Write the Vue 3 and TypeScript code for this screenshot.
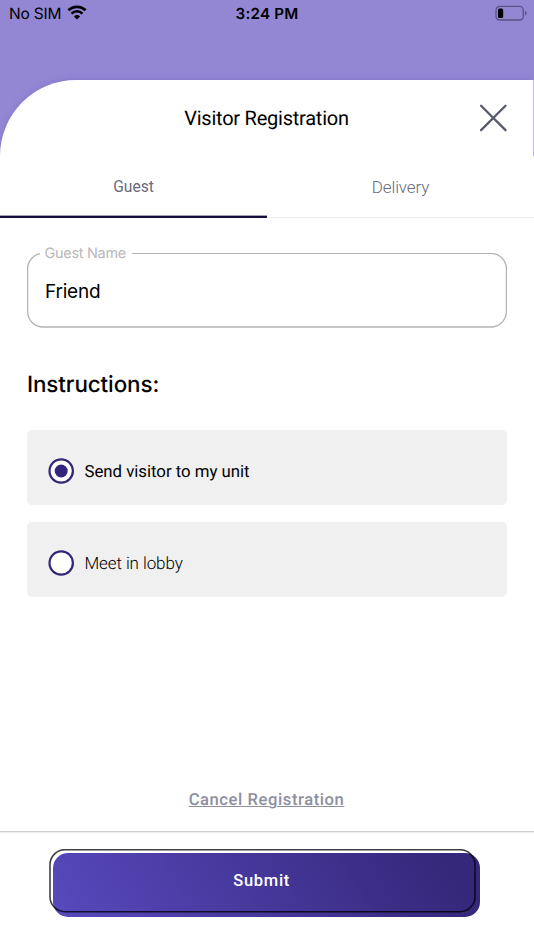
<script setup lang="ts">
import { ref } from 'vue'

type Tab = 'Guest' | 'Delivery'
const tabs: Tab[] = ['Guest', 'Delivery']
const activeTab = ref<Tab>('Guest')
const guestName = ref('Friend')
const options = ['Send visitor to my unit', 'Meet in lobby']
const selected = ref(options[0])
</script>

<template>
  <main class="screen">
    <div class="status">
      <div class="carrier">
        <span class="sim">No SIM</span>
        <svg class="wifi" width="20" height="15" viewBox="0 0 20 15">
          <path d="M1.4 5.3a12.3 12.3 0 0 1 17.2 0" fill="none" stroke="#000" stroke-width="2.7" />
          <path d="M4.5 8.6a7.9 7.9 0 0 1 11 0" fill="none" stroke="#000" stroke-width="2.5" />
          <path d="M10 14.5 6.9 11.4a4.5 4.5 0 0 1 6.2 0z" fill="#000" />
        </svg>
      </div>
      <span class="time">3:24 PM</span>
      <svg class="battery" width="32" height="16" viewBox="0 0 32 16">
        <rect x="1" y="1.4" width="27.3" height="13.6" rx="3.7" fill="none" stroke="#5b5383" stroke-width="1.3" />
        <rect x="3" y="3.6" width="5.2" height="9.3" rx="1.5" fill="#000" />
        <path d="M30 5.7q1.5.9 1.5 2.5T30 10.7z" fill="#5b5383" />
      </svg>
    </div>

    <div class="header-back">
      <header class="header">
        <h1 class="title">Visitor Registration</h1>
        <button class="close" aria-label="Close">
          <svg width="28" height="28" viewBox="0 0 28 28">
            <path d="M2.1 1.7 26.5 26.1M26.5 1.7 2.1 26.1" stroke="#585b6c" stroke-width="2.3" stroke-linecap="round" />
          </svg>
        </button>
      </header>
    </div>

    <nav class="tabs">
      <button
        v-for="tab in tabs"
        :key="tab"
        class="tab"
        :class="{ active: tab === activeTab }"
        @click="activeTab = tab"
      ><span>{{ tab }}</span></button>
    </nav>

    <section class="content">
      <label class="field">
        <svg class="field-frame" width="480" height="75" viewBox="0 0 480 75">
          <rect x="0.6" y="0.4" width="478.8" height="73.6" rx="15.5" fill="none" stroke="#b4b4b4" stroke-width="1.3" />
        </svg>
        <span class="field-label">Guest Name</span>
        <input v-model="guestName" class="field-input" type="text" />
      </label>
      <h2 class="heading">Instructions:</h2>
      <div class="options">
        <div
          v-for="option in options"
          :key="option"
          class="option"
          :class="{ selected: option === selected }"
          @click="selected = option"
        >
          <svg class="radio" width="26" height="26" viewBox="0 0 26 26">
            <circle cx="13.2" cy="13" r="11.7" fill="#fff" stroke="#32257b" stroke-width="2.2" />
            <circle v-if="option === selected" cx="13.2" cy="13" r="6.5" fill="#32257b" />
          </svg>
          <span class="option-text">{{ option }}</span>
        </div>
      </div>
      <a class="cancel">Cancel Registration</a>
    </section>

    <footer class="footer">
      <button class="submit">
        <span>Submit</span>
        <svg class="outline" width="428" height="65" viewBox="0 0 428 65">
          <rect x="1" y="0.7" width="425" height="62" rx="15" fill="none" stroke="#000" stroke-opacity="0.75" stroke-width="1.6" />
        </svg>
      </button>
    </footer>
  </main>
</template>

<style>
body {
  background: #fff;
}
</style>

<style scoped>
* {
  box-sizing: border-box;
}
button {
  padding: 0;
  border: 0;
  background: none;
  font-family: inherit;
}
h1,
h2 {
  margin: 0;
}
.screen {
  display: flex;
  flex-direction: column;
  width: 534px;
  height: 950px;
  overflow: hidden;
  background: #fff;
  color: #000;
  font-family: Roboto, sans-serif;
  text-rendering: geometricPrecision;
}
.status {
  display: grid;
  grid-template-columns: 1fr auto 1fr;
  align-items: start;
  height: 80px;
  padding: 4px 7px 0 9px;
  background: #9387d4;
  font-family: Inter, sans-serif;
  font-size: 15.5px;
  line-height: 20px;
}
.carrier {
  display: flex;
  gap: 6px;
}
.sim {
  letter-spacing: -0.2px;
}
.wifi {
  margin-top: 1px;
}
.time {
  margin-right: 2px;
  font-weight: 600;
  font-size: 15.2px;
  letter-spacing: 0.2px;
}
.battery {
  justify-self: end;
  margin-top: 1px;
}
.header-back {
  height: 76px;
  padding-right: 1px;
  background: linear-gradient(90deg, #9387d4 50%, #c1b9e4 100%);
}
.header {
  display: grid;
  grid-template-columns: 1fr auto 1fr;
  align-items: center;
  height: 76px;
  padding: 0 26px;
  border-top-left-radius: 76px;
  background: #fff;
  box-shadow: 0 0 6px rgba(85, 70, 160, 0.25);
  clip-path: inset(-8px 0 0 0);
}
.title {
  grid-column: 2;
  font-size: 20px;
  font-weight: 400;
  line-height: 24px;
  letter-spacing: -0.24px;
}
.close {
  justify-self: end;
  height: 28px;
}
.tabs {
  display: flex;
  height: 62px;
  background: linear-gradient(#efeff1, #efeff1) bottom / 100% 1px no-repeat;
}
.tab {
  flex: 1;
  color: #696a7b;
  font-size: 17px;
  font-weight: 300;
  letter-spacing: -0.1px;
}
.tab.active {
  background: linear-gradient(#a5a3b4 0 1px, #15103a 1px 3px) bottom / 100% 3px no-repeat;
  font-size: 15.6px;
  font-weight: 400;
  letter-spacing: 0;
}
.content {
  display: flex;
  flex: 1;
  flex-direction: column;
  padding: 35px 27px 0;
}
.field {
  position: relative;
  display: flex;
  height: 74px;
  font-family: Inter, sans-serif;
}
.field-frame {
  position: absolute;
  top: 0;
  left: 0;
}
.field-label {
  position: absolute;
  top: -8px;
  left: 13px;
  padding: 0 6px 0 4.5px;
  background: #fff;
  color: #b8b8b8;
  font-size: 14.4px;
  line-height: 18px;
  letter-spacing: -0.25px;
}
.field-input {
  position: relative;
  flex: 1;
  min-width: 0;
  padding: 2px 18px 0;
  border: 0;
  outline: 0;
  background: transparent;
  color: #000;
  font: 400 19px Inter, sans-serif;
  letter-spacing: -0.2px;
}
.heading {
  margin-top: 43px;
  font: 500 22.4px/30px Inter, sans-serif;
  letter-spacing: -0.1px;
}
.options {
  display: flex;
  flex-direction: column;
  gap: 17px;
  margin-top: 30px;
}
.option {
  display: flex;
  align-items: center;
  gap: 10.5px;
  height: 75px;
  padding: 6px 21px 0;
  border-radius: 5px;
  background: #f0f0f0;
  font-size: 17px;
  font-weight: 300;
  letter-spacing: -0.1px;
}
.option-text {
  padding-top: 2px;
}
.option.selected {
  font-size: 16.8px;
  font-weight: 400;
  letter-spacing: -0.02px;
}
.cancel {
  align-self: center;
  margin: auto 0 20px;
  padding-right: 1px;
  color: #8e8fa0;
  font-size: 16.6px;
  font-weight: 500;
  line-height: 20px;
  letter-spacing: 0.57px;
  text-decoration: underline;
  text-decoration-thickness: 1px;
}
.footer {
  display: flex;
  height: 119px;
  padding: 21px 0 0 53.4px;
  background: linear-gradient(#ececec, #ececec) top / 100% 1px no-repeat;
  border-top: 1px solid #d0d0d0;
}
.submit {
  position: relative;
  width: 427px;
  height: 64px;
  border-radius: 15px;
  background: linear-gradient(60deg, #5849be 0%, #352779 92%);
  color: #fff;
  font-size: 16.5px;
  font-weight: 500;
  letter-spacing: 0.7px;
}
.submit span {
  display: block;
  padding: 0 10.5px 9px 0;
}
.outline {
  position: absolute;
  top: -4px;
  left: -4.5px;
}
</style>
